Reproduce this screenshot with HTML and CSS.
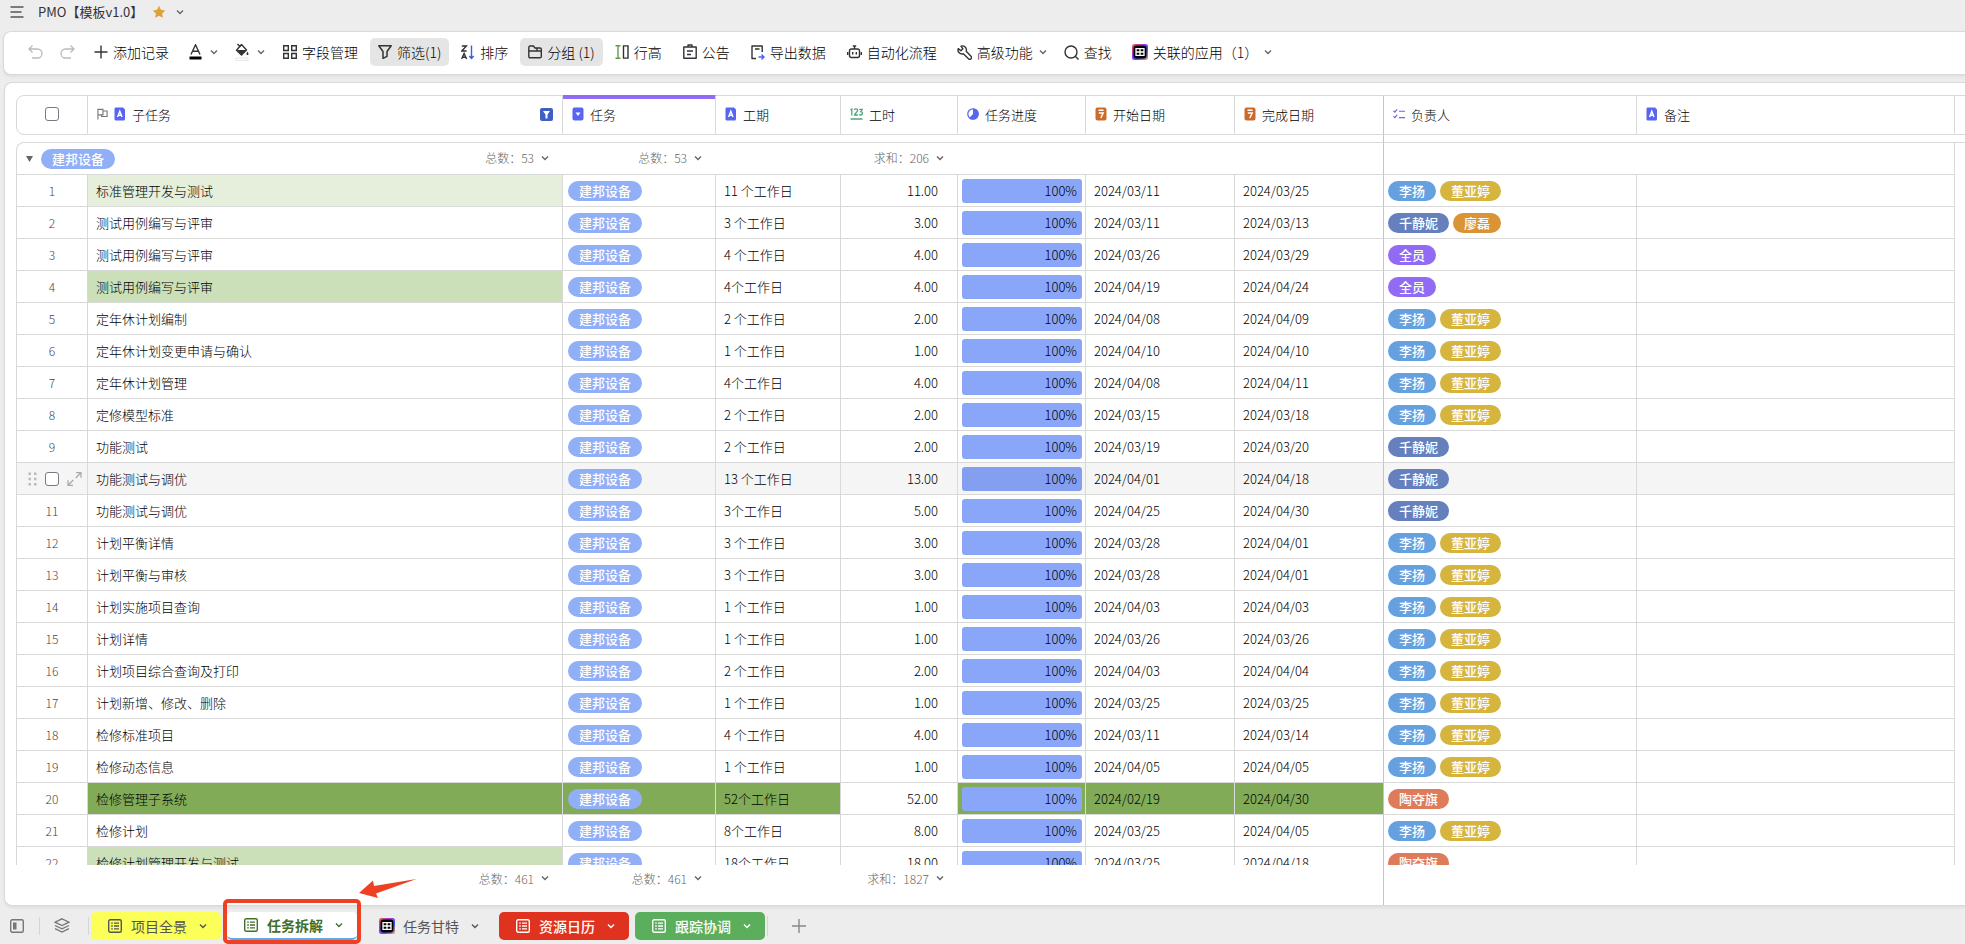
FILE: index.html
```
<!DOCTYPE html>
<html lang="zh-CN">

<head>
    <meta charset="UTF-8">
    <meta name="viewport" content="width=device-width, initial-scale=1.0">
    <title>PMO【模板v1.0】</title>
    <link rel="stylesheet" href="styles.css">
</head>

<body>
    <!-- 图标 -->
    <svg class="symbols" aria-hidden="true">
        <symbol id="i-down" viewBox="0 0 10 10"><path d="M2 3.5l3 3 3-3" fill="none" stroke="currentColor" stroke-width="1.4" /></symbol>
        <symbol id="i-text" viewBox="0 0 12 14"><path d="M1.5 0.5H9l2 2v9.500a1.500 1.500 0 0 1-1.500 1.500h-8A1.500 1.500 0 0 1 0.500 12V2a1.500 1.500 0 0 1 1-1.500z" fill="#5865f2" /><path d="M3.600 10L5.800 4.200 8 10M4.400 8.200h2.800" fill="none" stroke="#fff" stroke-width="1.400" /></symbol>
        <symbol id="i-select" viewBox="0 0 12 14"><rect x="0.500" y="0.500" width="11" height="13" rx="2" fill="#5865f2" /><path d="M3.500 5.500h5L6 9z" fill="#fff" /></symbol>
        <symbol id="i-num" viewBox="0 0 13 14"><path d="M0.500 3l1.300-1v6.500M4.500 3c0-1.500 3.200-1.500 3.200.3C7.700 4.800 4.700 6.500 4.500 8h3.400M9.300 2.300h3L10.800 4.500c2.200 0 2 3.500 0 3.500-.7 0-1.200-.2-1.600-.7M0.500 12h12" fill="none" stroke="#4fa67c" stroke-width="1.300" /></symbol>
        <symbol id="i-prog" viewBox="0 0 12 14"><circle cx="6" cy="7" r="5.200" fill="#fff" stroke="#5865f2" stroke-width="1.300" /><path d="M6 1.500A5.500 5.500 0 1 1 2.300 11L6 7z" fill="#5865f2" /></symbol>
        <symbol id="i-date" viewBox="0 0 12 14"><rect x="0.500" y="0.500" width="11" height="13" rx="2" fill="#cb6a2b" /><path d="M3.500 3.200h5M3.800 6h4.400L5.800 11" fill="none" stroke="#fff" stroke-width="1.400" /></symbol>
        <symbol id="i-multi" viewBox="0 0 13 14"><path d="M0.500 3.500L2 5l2.500-3M6.500 4H13M0.500 9.500L2 11l2.500-3M6.500 11H13" fill="none" stroke="#7a5cf0" stroke-width="1.300" /></symbol>
        <symbol id="i-list" viewBox="0 0 14 14"><rect x="0.700" y="0.700" width="12.600" height="12.600" rx="1.500" fill="none" stroke="currentColor" stroke-width="1.400" /><path d="M3.200 4.200h1.600M6 4.200h5M3.200 7h1.600M6 7h5M3.200 9.800h1.600M6 9.800h5" stroke="currentColor" stroke-width="1.300" /></symbol>
        <symbol id="i-app" viewBox="0 0 16 16">
            <defs>
                <linearGradient id="rainbow" x1="0" y1="0" x2="1" y2="1">
                    <stop offset="0" stop-color="#f25b3c" /><stop offset="0.350" stop-color="#a13be0" /><stop offset="0.650" stop-color="#3d5bf5" /><stop offset="1" stop-color="#f0a060" />
                </linearGradient>
            </defs>
            <rect width="16" height="16" rx="2.500" fill="url(#rainbow)" /><rect x="1.500" y="1.500" width="13" height="13" rx="3" fill="#000" />
            <path d="M4 4.700h8v6.600H4zM8 4.700v6.600M4 8h8" fill="none" stroke="#fff" stroke-width="1.300" />
        </symbol>
    </svg>

    <header class="topbar">
        <button class="plain" aria-label="菜单"><svg width="14" height="12" viewBox="0 0 14 12"><path d="M0.500 1h13M0.500 6h11M0.500 11h13" stroke="#555" stroke-width="1.600" /></svg></button>
        <h1>PMO【模板v1.0】</h1>
        <button class="plain" aria-label="收藏"><svg width="14" height="14" viewBox="0 0 14 14"><path d="M7 0.800l1.900 4 4.300.6-3.100 3 .8 4.400L7 10.700l-3.900 2.100.8-4.400-3.100-3 4.300-.6z" fill="#dca137" /></svg></button>
        <button class="plain" aria-label="更多"><svg class="down"><use href="#i-down" /></svg></button>
    </header>

    <nav class="toolbar">
        <button class="tool small off" aria-label="撤销"><svg width="15" height="16" viewBox="0 0 15 16"><path d="M4.500 1.500L1 5l3.500 3.500M1 5h8.500a4.300 4.300 0 0 1 0 9H4" fill="none" stroke="currentColor" stroke-width="1.300" /></svg></button>
        <button class="tool small off" aria-label="重做"><svg width="15" height="16" viewBox="0 0 15 16"><path d="M10.500 1.500L14 5l-3.500 3.500M14 5H5.500a4.300 4.300 0 0 0 0 9H11" fill="none" stroke="currentColor" stroke-width="1.300" /></svg></button>
        <button class="tool"><svg width="14" height="14" viewBox="0 0 14 14"><path d="M7 0.500v13M0.500 7h13" stroke="currentColor" stroke-width="1.400" /></svg>添加记录</button>
        <button class="tool color" aria-label="文字颜色"><svg width="13" height="16" viewBox="0 0 13 16"><path d="M2 10.500L6.500 0.800 11 10.500M3.600 7.300h5.800" fill="none" stroke="currentColor" stroke-width="1.400" /><path d="M0.500 14h12" stroke="#000" stroke-width="3" /></svg><svg class="down"><use href="#i-down" /></svg></button>
        <button class="tool color" aria-label="填充颜色"><svg width="14" height="18" viewBox="0 0 14 18"><path d="M2.500 1l3 3M6.500 1.500L11.500 7 6.500 12 1.500 7.200z" fill="none" stroke="currentColor" stroke-width="1.400" stroke-linejoin="round" /><path d="M2 7h9l-4.500 5z" fill="currentColor" /><path d="M12.500 8.500c1.600 2.400 1 3.500 0 3.500s-1.600-1.100 0-3.500z" fill="currentColor" /><path d="M1 15h12v2.500H1z" fill="#fff" stroke="#ddd" stroke-width="0.700" /></svg><svg class="down"><use href="#i-down" /></svg></button>
        <button class="tool"><svg width="14" height="14" viewBox="0 0 14 14"><path d="M0.700 0.700h4.600v4.800H0.700zM8.700 0.700h4.600v4.800H8.700zM0.700 8.500h4.600v4.800H0.700zM8.700 8.500h4.600v4.800H8.700z" fill="none" stroke="currentColor" stroke-width="1.400" /></svg>字段管理</button>
        <button class="tool on"><svg width="14" height="14" viewBox="0 0 14 14"><path d="M0.800 0.800h12.400L9 6.500v4.800l-4 2V6.500z" fill="none" stroke="currentColor" stroke-width="1.500" stroke-linejoin="round" /></svg>筛选(1)</button>
        <button class="tool"><svg width="14" height="15" viewBox="0 0 14 15"><path d="M0.800 1h4.600L0.800 6h4.800M0.600 14l2.500-5.500 2.500 5.500M1.500 12.200h3.200" fill="none" stroke="currentColor" stroke-width="1.400" /><path d="M10.500 0.500v13M8.300 11l2.200 2.500 2.200-2.500" fill="none" stroke="#3d5fe0" stroke-width="1.400" /></svg>排序</button>
        <button class="tool on"><svg width="14" height="14" viewBox="0 0 14 14"><path d="M0.800 2.500c0-1 .5-1.500 1.300-1.500h3.400l1.400 2H12c.8 0 1.300.5 1.300 1.300v7.200c0 .8-.5 1.300-1.300 1.300H2.100c-.8 0-1.300-.5-1.300-1.300zM1 6h12M9 3v3" fill="none" stroke="currentColor" stroke-width="1.400" /></svg>分组 (1)</button>
        <button class="tool"><svg width="14" height="14" viewBox="0 0 14 14"><path d="M0.500 0.700h5M3 0.700v12.600M0.500 13.300h5" stroke="#5f9e43" stroke-width="1.400" /><path d="M8.500 0.900h4.500v12.200H8.500z" fill="none" stroke="currentColor" stroke-width="1.400" /></svg>行高</button>
        <button class="tool"><svg width="14" height="16" viewBox="0 0 14 16"><path d="M0.800 3h12.400v11.200H0.800zM5 3V1h4v2M4 7h6M4 10.500h4" fill="none" stroke="currentColor" stroke-width="1.400" stroke-linejoin="round" /></svg>公告</button>
        <button class="tool"><svg width="14" height="15" viewBox="0 0 14 15"><path d="M11.200 7V1H1v12.500h4M4 4h4.500" fill="none" stroke="currentColor" stroke-width="1.400" stroke-linejoin="round" /><path d="M7.500 12h5M10.500 9.500L13 12l-2.500 2.500" fill="none" stroke="#4a63f0" stroke-width="1.400" /></svg>导出数据</button>
        <button class="tool"><svg width="15" height="14" viewBox="0 0 15 14"><rect x="2.500" y="4" width="10" height="8.500" rx="2" fill="none" stroke="currentColor" stroke-width="1.400" /><path d="M7.500 4V1M5.800 1h3.400M0.700 7v3M14.300 7v3M5.700 7v2.500M9.300 7v2.500" stroke="currentColor" stroke-width="1.400" /></svg>自动化流程</button>
        <button class="tool more"><svg width="15" height="15" viewBox="0 0 15 15"><path d="M4 1.200a4 4 0 0 1 5.200 5L14 11.300a1.700 1.700 0 0 1-2.500 2.500L6.300 8.800a4 4 0 0 1-5-5.200l2.600 2.200 2-2z" fill="none" stroke="currentColor" stroke-width="1.400" stroke-linejoin="round" /></svg>高级功能<svg class="down"><use href="#i-down" /></svg></button>
        <button class="tool"><svg width="15" height="15" viewBox="0 0 15 15"><circle cx="7" cy="7" r="6" fill="none" stroke="currentColor" stroke-width="1.400" /><path d="M11.200 11.200l3.300 3.300" stroke="currentColor" stroke-width="1.400" /></svg>查找</button>
        <button class="tool more"><svg width="16" height="16"><use href="#i-app" /></svg>关联的应用（1）<svg class="down"><use href="#i-down" /></svg></button>
    </nav>

    <main class="panel">
        <div class="scroll">
            <table class="grid">
                <colgroup>
                    <col class="c-no"><col class="c-name"><col class="c-task"><col class="c-days"><col class="c-hours"><col class="c-prog"><col class="c-date"><col class="c-date"><col class="c-owner"><col class="c-note"><col class="c-end">
                </colgroup>
                <thead>
                    <tr class="head">
                        <th class="no"><input type="checkbox" aria-label="全选"></th>
                        <th>
                            <div class="field">
                                <svg width="11" height="12" viewBox="0 0 12 12"><path d="M1 12V1h5.500v6H1M6.500 2.800H11v6H5V7" fill="none" stroke="#777" stroke-width="1.200" /></svg>
                                <svg width="12" height="14"><use href="#i-text" /></svg>子任务
                                <svg class="filtered" width="13" height="13" viewBox="0 0 13 13"><rect width="13" height="13" rx="2" fill="#3f5fc4" /><path d="M3 3h7L7.500 6.500v4h-2v-4z" fill="#fff" /></svg>
                            </div>
                        </th>
                        <th class="grouped"><div class="field"><svg width="12" height="14"><use href="#i-select" /></svg>任务</div></th>
                        <th><div class="field"><svg width="12" height="14"><use href="#i-text" /></svg>工期</div></th>
                        <th><div class="field"><svg width="13" height="14"><use href="#i-num" /></svg>工时</div></th>
                        <th><div class="field"><svg width="12" height="14"><use href="#i-prog" /></svg>任务进度</div></th>
                        <th><div class="field"><svg width="12" height="14"><use href="#i-date" /></svg>开始日期</div></th>
                        <th class="frozen"><div class="field"><svg width="12" height="14"><use href="#i-date" /></svg>完成日期</div></th>
                        <th><div class="field"><svg width="12" height="14"><use href="#i-multi" /></svg>负责人</div></th>
                        <th><div class="field"><svg width="12" height="14"><use href="#i-text" /></svg>备注</div></th>
                        <th class="end"></th>
                    </tr>
                    <tr class="space">
                        <td colspan="8" class="frozen"></td>
                        <td colspan="3"></td>
                    </tr>
                </thead>
                <tbody id="rows">
                    <tr class="group">
                        <td colspan="2">
                            <div class="title">
                                <button class="plain" aria-label="折叠"><svg width="7" height="6" viewBox="0 0 7 6"><path d="M0 0h7L3.500 6z" fill="#666" /></svg></button>
                                <span class="tag">建邦设备</span>
                                <button class="total">总数：53<svg class="down"><use href="#i-down" /></svg></button>
                            </div>
                        </td>
                        <td><button class="total">总数：53<svg class="down"><use href="#i-down" /></svg></button></td>
                        <td></td>
                        <td><button class="total">求和：206<svg class="down"><use href="#i-down" /></svg></button></td>
                        <td colspan="3" class="frozen"></td>
                        <td colspan="2" class="last"></td>
                        <td class="end"></td>
                    </tr>
                </tbody>
            </table>
        </div>
        <div class="totals">
            <span></span>
            <button class="total">总数：461<svg class="down"><use href="#i-down" /></svg></button>
            <button class="total">总数：461<svg class="down"><use href="#i-down" /></svg></button>
            <span></span>
            <button class="total">求和：1827<svg class="down"><use href="#i-down" /></svg></button>
            <span class="frozen"></span>
        </div>
    </main>

    <footer class="tabs">
        <button class="plain side" aria-label="侧栏"><svg width="14" height="14" viewBox="0 0 14 14"><rect x="0.700" y="0.700" width="12.600" height="12.600" rx="1.500" fill="none" stroke="#777" stroke-width="1.400" /><path d="M3 3.500h3.500v7H3z" fill="#777" /></svg></button>
        <button class="plain layers" aria-label="图层"><svg width="16" height="15" viewBox="0 0 16 15"><path d="M8 0.800l7 3.400-7 3.400-7-3.400zM1 7.500l7 3.400 7-3.400M1 10.600L8 14l7-3.400" fill="none" stroke="#777" stroke-width="1.300" /></svg></button>
        <div class="list">
            <button class="tab yellow"><svg width="14" height="14"><use href="#i-list" /></svg>项目全景<svg class="down"><use href="#i-down" /></svg></button>
            <div class="mark">
                <button class="tab current"><svg width="14" height="14"><use href="#i-list" /></svg>任务拆解<svg class="down"><use href="#i-down" /></svg></button>
                <span class="box"></span>
                <svg class="arrow" width="58" height="20" viewBox="0 0 58 20"><path d="M0 14L14 1.500l1 5.500L57.500 0 17 14.500l2 4.500z" fill="#ee4124" /></svg>
            </div>
            <button class="tab app"><svg width="16" height="16"><use href="#i-app" /></svg>任务甘特<svg class="down"><use href="#i-down" /></svg></button>
            <button class="tab red"><svg width="14" height="14"><use href="#i-list" /></svg>资源日历<svg class="down"><use href="#i-down" /></svg></button>
            <button class="tab green"><svg width="14" height="14"><use href="#i-list" /></svg>跟踪协调<svg class="down"><use href="#i-down" /></svg></button>
        </div>
        <button class="plain add" aria-label="新增"><svg width="14" height="14" viewBox="0 0 14 14"><path d="M7 0v14M0 7h14" stroke="#888" stroke-width="1.400" /></svg></button>
    </footer>

    <script>
        // 子任务, 工期, 工时, 开始, 完成, 负责人, 行样式
        var data = [
            ['标准管理开发与测试', '11 个工作日', '11.00', '03/11', '03/25', '李扬 董亚婷', 'light'],
            ['测试用例编写与评审', '3 个工作日', '3.00', '03/11', '03/13', '千静妮 廖磊'],
            ['测试用例编写与评审', '4 个工作日', '4.00', '03/26', '03/29', '全员'],
            ['测试用例编写与评审', '4个工作日', '4.00', '04/19', '04/24', '全员', 'middle'],
            ['定年休计划编制', '2 个工作日', '2.00', '04/08', '04/09', '李扬 董亚婷'],
            ['定年休计划变更申请与确认', '1 个工作日', '1.00', '04/10', '04/10', '李扬 董亚婷'],
            ['定年休计划管理', '4个工作日', '4.00', '04/08', '04/11', '李扬 董亚婷'],
            ['定修模型标准', '2 个工作日', '2.00', '03/15', '03/18', '李扬 董亚婷'],
            ['功能测试', '2 个工作日', '2.00', '03/19', '03/20', '千静妮'],
            ['功能测试与调优', '13 个工作日', '13.00', '04/01', '04/18', '千静妮', 'hover'],
            ['功能测试与调优', '3个工作日', '5.00', '04/25', '04/30', '千静妮'],
            ['计划平衡详情', '3 个工作日', '3.00', '03/28', '04/01', '李扬 董亚婷'],
            ['计划平衡与审核', '3 个工作日', '3.00', '03/28', '04/01', '李扬 董亚婷'],
            ['计划实施项目查询', '1 个工作日', '1.00', '04/03', '04/03', '李扬 董亚婷'],
            ['计划详情', '1 个工作日', '1.00', '03/26', '03/26', '李扬 董亚婷'],
            ['计划项目综合查询及打印', '2 个工作日', '2.00', '04/03', '04/04', '李扬 董亚婷'],
            ['计划新增、修改、删除', '1 个工作日', '1.00', '03/25', '03/25', '李扬 董亚婷'],
            ['检修标准项目', '4 个工作日', '4.00', '03/11', '03/14', '李扬 董亚婷'],
            ['检修动态信息', '1 个工作日', '1.00', '04/05', '04/05', '李扬 董亚婷'],
            ['检修管理子系统', '52个工作日', '52.00', '02/19', '04/30', '陶夺旗', 'dark'],
            ['检修计划', '8个工作日', '8.00', '03/25', '04/05', '李扬 董亚婷'],
            ['检修计划管理开发与测试', '18个工作日', '18.00', '03/25', '04/18', '陶夺旗', 'middle']
        ];
        var colors = { '李扬': 'sky', '董亚婷': 'gold', '千静妮': 'navy', '廖磊': 'orange', '全员': 'purple', '陶夺旗': 'coral' };
        var tools = '<div class="rowtools">' +
            '<svg width="9" height="14" viewBox="0 0 9 14"><path d="M0.500 0.500h2.500v2.500H0.500zM6 0.500h2.500v2.500H6zM0.500 5.800h2.500v2.500H0.500zM6 5.800h2.500v2.500H6zM0.500 11h2.500v2.500H0.500zM6 11h2.500v2.500H6z" fill="#bbb"/></svg>' +
            '<input type="checkbox" aria-label="选择第10行">' +
            '<svg width="15" height="14" viewBox="0 0 15 14"><path d="M9 0.700h5v5M14 0.700L8.700 6M1 8.300v5h5M1 13.300L6.300 8" fill="none" stroke="#aaa" stroke-width="1.300"/></svg></div>';
        var rows = document.querySelector('#rows');
        for (var i = 0; i < data.length; i++) {
            var d = data[i];
            var tr = document.createElement('tr');
            tr.className = 'row ' + (d[6] || '');
            var owners = d[5].split(' ').map(function (name) {
                return '<span class="tag ' + colors[name] + '">' + name + '</span>';
            }).join('');
            tr.innerHTML = '<td class="no">' + (d[6] === 'hover' ? tools : i + 1) + '</td>' +
                '<td class="name">' + d[0] + '</td>' +
                '<td class="task tint"><div class="tags"><span class="tag">建邦设备</span></div></td>' +
                '<td class="tint">' + d[1] + '</td>' +
                '<td class="hours">' + d[2] + '</td>' +
                '<td class="prog tint"><div class="bar">100%</div></td>' +
                '<td class="tint">2024/' + d[3] + '</td>' +
                '<td class="tint frozen">2024/' + d[4] + '</td>' +
                '<td class="owner"><div class="tags">' + owners + '</div></td>' +
                '<td></td><td class="end"></td>';
            rows.appendChild(tr);
        }
    </script>
</body>

</html>
```
FILE: styles.css
```
* {
    box-sizing: border-box;
    margin: 0;
    padding: 0;
}

body {
    display: flex;
    flex-direction: column;
    height: 100vh;
    overflow: hidden;
    background: #ededed;
    color: #000;
    font-family: "Noto Sans CJK SC", sans-serif;
    font-size: 13px;
    font-weight: 300;
}

button {
    display: flex;
    align-items: center;
    border: 0;
    background: none;
    color: inherit;
    font: inherit;
    white-space: nowrap;
    cursor: pointer;
}

svg {
    flex: none;
    display: block;
}

.symbols {
    position: absolute;
    width: 0;
    height: 0;
}

.down {
    width: 10px;
    height: 10px;
    color: #666;
}

input[type="checkbox"] {
    appearance: none;
    display: block;
    width: 14px;
    height: 14px;
    border: 1px solid #777b88;
    border-radius: 3px;
    background: #fff;
}

/* 顶部标题 */
.topbar {
    display: flex;
    align-items: center;
    height: 31px;
    padding: 0 10px 8px;
    flex: none;
}

.topbar h1 {
    margin: 0 9px 0 14px;
    color: #333;
    font-size: 13px;
    font-weight: 400;
}

.topbar .down {
    margin-left: 9px;
}

/* 工具栏 */
.toolbar {
    display: flex;
    align-items: center;
    gap: 3px;
    flex: none;
    height: 44px;
    margin-left: 3px;
    padding: 0 0 2px 17px;
    border: 1px solid #d9d9d9;
    border-right: 0;
    border-radius: 8px 0 0 8px;
    background: #fff;
    box-shadow: 0 2px 3px rgba(0, 0, 0, 0.06);
}

.tool {
    gap: 5px;
    height: 28px;
    padding: 0 9px;
    border-radius: 5px;
    font-size: 14px;
}

.tool svg:not(.down) {
    color: #333;
}

.tool.small {
    padding: 0 7px;
}

.tool.color {
    gap: 7px;
    padding: 0 5px 0 8px;
}

.tool.more {
    padding: 0 4px 0 8px;
}

.tool.off svg {
    color: #bbb;
}

.tool.on {
    padding: 0 8px;
    background: #e5e5e5;
}

/* 表格面板 */
.panel {
    display: flex;
    flex-direction: column;
    flex: 1;
    min-height: 0;
    margin: 7px 0 0 4px;
    padding: 12px 0 0 11px;
    border: 1px solid #d9d9d9;
    border-right: 0;
    border-radius: 8px 0 0 8px;
    background: #fff;
    box-shadow: 0 2px 3px rgba(0, 0, 0, 0.06);
}

.scroll {
    flex: 1;
    min-height: 0;
    overflow: hidden;
}

.grid {
    width: 100%;
    table-layout: fixed;
    border-collapse: separate;
    border-spacing: 0;
}

.c-no { width: 72px; }
.c-name { width: 475px; }
.c-task { width: 153px; }
.c-days { width: 125px; }
.c-hours { width: 117px; }
.c-prog { width: 128px; }
.c-date { width: 149px; }
.c-owner { width: 253px; }
.c-end { width: 10px; }

.head th {
    height: 40px;
    padding-bottom: 2px;
    border: 1px solid #d9d9d9;
    border-left: 0;
    font-weight: 300;
    text-align: left;
}

.head .no {
    border-left: 1px solid #d9d9d9;
    border-radius: 8px 0 0 8px;
}

.head .no input {
    margin: 0 auto;
}

.head .end {
    border-right: 0;
}

.head .grouped {
    box-shadow: inset 0 3px #8f6cf3;
    border-top-color: #8f6cf3;
}

.field {
    display: flex;
    align-items: center;
    gap: 6px;
    padding: 0 9px;
}

.filtered {
    margin-left: auto;
}

.space td {
    height: 7px;
}

.grid .frozen,
.totals .frozen {
    border-right: 1px solid #c3c3cf;
}

.group td {
    height: 33px;
    padding-bottom: 2px;
    border-top: 1px solid #d9d9d9;
    border-bottom: 1px solid #d9d9d9;
}

.group td:first-child {
    padding-bottom: 0;
    border-left: 1px solid #d9d9d9;
    border-radius: 8px 0 0 0;
}

.group .last {
    border-right: 1px solid #d9d9d9;
}

.group .end {
    border-bottom: 0;
}

.title {
    display: flex;
    align-items: center;
    padding-left: 9px;
}

.title .tag {
    margin-left: 8px;
}

.title .total {
    padding-bottom: 2px;
}

.total {
    gap: 6px;
    margin-left: auto;
    padding-right: 13px;
    color: #666;
    font-size: 12px;
}

.row td {
    height: 32px;
    padding: 0 8px;
    border-right: 1px solid #d9d9d9;
    border-bottom: 1px solid #d9d9d9;
    white-space: nowrap;
}

.row .no {
    padding: 0;
    border-left: 1px solid #d9d9d9;
    color: #444;
    font-size: 12px;
    text-align: center;
}

.row .end {
    border: 0;
}

.row .hours {
    padding-right: 19px;
    text-align: right;
}

.row .prog {
    padding: 1px 3px 0 4px;
}

.row .task,
.row .owner {
    padding: 1px 4px 0;
}

.row .task {
    padding-left: 5px;
}

.bar {
    height: 24px;
    padding-right: 5px;
    border-radius: 3px;
    background: #89a6f9;
    line-height: 24px;
    text-align: right;
}

.tags {
    display: flex;
    gap: 4px;
}

.tag {
    height: 20px;
    padding: 0 11px;
    border-radius: 10px;
    background: #91aff6;
    color: #fff;
    font-size: 13px;
    font-weight: 500;
    line-height: 20px;
}

.sky { background: #66a1df; }
.gold { background: #d6b53f; }
.navy { background: #6580bd; }
.orange { background: #da9435; }
.purple { background: #926bf4; }
.coral { background: #de7b5a; }

.light .name { background: #e5efdb; }
.middle .name { background: #cbe0b9; }
.dark .name,
.dark .tint { background: #82ab58; }

.hover td:not(.end) {
    background: #f5f5f5;
}

.hover .bar {
    background: #849ff0;
}

.rowtools {
    display: flex;
    align-items: center;
    gap: 8px;
    padding-left: 11px;
}

.totals {
    display: grid;
    grid-template-columns: 72px 475px 153px 125px 117px 426px;
    flex: none;
    height: 40px;
}

.totals .total {
    height: 26px;
}

/* 底部标签 */
.tabs {
    display: flex;
    align-items: center;
    flex: none;
    height: 38px;
    padding: 1px 10px 0;
}

.layers {
    height: 18px;
    margin-left: 15px;
    padding: 0 18px 0 14px;
    border: solid #d5d5d5;
    border-width: 0 1px;
}

.list {
    display: flex;
    gap: 6px;
    margin-left: 2px;
}

.tab {
    width: 130px;
    height: 28px;
    padding-left: 17px;
    border-radius: 5px;
    color: #555;
    font-size: 14px;
    font-weight: 400;
}

.tab svg:first-child {
    margin-right: 9px;
}

.tab .down {
    margin-left: 11px;
    color: inherit;
}

.tab.app svg:first-child {
    margin: 0 8px 0 -1px;
}

.tab.yellow {
    background: #fcff57;
}

.tab.current {
    border-bottom: 2px solid #5ea7ea;
    background: #fff;
    color: #42702a;
    font-weight: 700;
}

.tab.red {
    background: #df3320;
    color: #fff;
    font-weight: 500;
}

.tab.green {
    background: #5bae5b;
    color: #fff;
    font-weight: 500;
}

/* 红框和箭头标注 */
.mark {
    position: relative;
}

.box {
    position: absolute;
    top: -13px;
    right: -4px;
    bottom: -4px;
    left: -4px;
    border: 4px solid #ee4124;
    border-radius: 5px;
    pointer-events: none;
}

.arrow {
    position: absolute;
    top: -33px;
    left: 132px;
    pointer-events: none;
}

.add {
    height: 20px;
    margin-left: 2px;
    padding-left: 24px;
    border-left: 1px solid #d5d5d5;
}
```
